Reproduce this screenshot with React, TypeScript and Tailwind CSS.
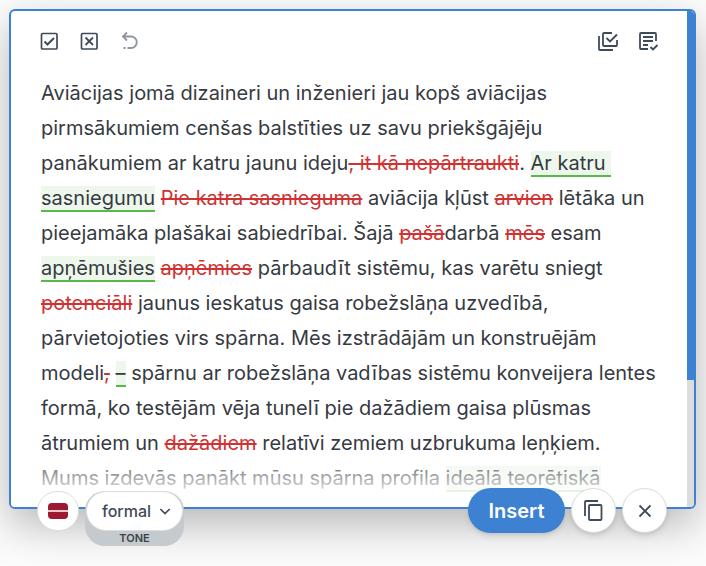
import React, { Fragment, useState } from "react";

type Part = { kind: "text" | "add" | "del"; value: string };

const parts: Part[] = [
  { kind: "text", value: "Aviācijas jomā dizaineri un inženieri jau kopš aviācijas pirmsākumiem cenšas balstīties uz savu priekšgājēju panākumiem ar katru jaunu ideju" },
  { kind: "del", value: ", it kā nepārtraukti" },
  { kind: "text", value: ". " },
  { kind: "add", value: "Ar katru sasniegumu" },
  { kind: "text", value: " " },
  { kind: "del", value: "Pie katra sasnieguma" },
  { kind: "text", value: " aviācija kļūst " },
  { kind: "del", value: "arvien" },
  { kind: "text", value: " lētāka un pieejamāka plašākai sabiedrībai. Šajā " },
  { kind: "del", value: "pašā" },
  { kind: "text", value: "darbā " },
  { kind: "del", value: "mēs" },
  { kind: "text", value: " esam " },
  { kind: "add", value: "apņēmušies" },
  { kind: "text", value: " " },
  { kind: "del", value: "apņēmies" },
  { kind: "text", value: " pārbaudīt sistēmu, kas varētu sniegt " },
  { kind: "del", value: "potenciāli" },
  { kind: "text", value: " jaunus ieskatus gaisa robežslāņa uzvedībā, pārvietojoties virs spārna. Mēs izstrādājām un konstruējām modeli" },
  { kind: "del", value: "," },
  { kind: "text", value: " " },
  { kind: "add", value: "–" },
  { kind: "text", value: " spārnu ar robežslāņa vadības sistēmu konveijera lentes formā, ko testējām vēja tunelī pie dažādiem gaisa plūsmas ātrumiem un " },
  { kind: "del", value: "dažādiem" },
  { kind: "text", value: " relatīvi zemiem uzbrukuma leņķiem. Mums izdevās panākt mūsu spārna profila " },
  { kind: "add", value: "ideālā teorētiskā" },
];

type IconProps = { children: React.ReactNode; className?: string };

const Icon: React.FC<IconProps> = ({ children, className = "size-6" }) => (
  <svg viewBox="0 0 24 24" fill="none" stroke="currentColor" strokeWidth="2" className={className} aria-hidden="true">
    {children}
  </svg>
);

const Toolbar: React.FC = () => (
  <div className="flex items-center justify-between text-[#3f4a5a]">
    <div className="flex gap-4">
      <button type="button" aria-label="Accept all">
        <Icon>
          <rect x="4.5" y="4.5" width="15.500" height="15.500" rx="1" strokeWidth="1.700" />
          <path d="M7.5 12.5l3 3 6.500-6.500" />
        </Icon>
      </button>
      <button type="button" aria-label="Reject all">
        <Icon>
          <rect x="4.5" y="4.5" width="15.500" height="15.500" rx="1" strokeWidth="1.700" />
          <path d="M8.500 8.500l7.500 7.500M16 8.500l-7.500 7.500" strokeWidth="1.800" />
        </Icon>
      </button>
      <button type="button" aria-label="Undo" className="text-[#8f959e]">
        <Icon>
          <path d="M10 3.500L6 7.500l4 4M6 7.500h8a5.700 5.700 0 0 1 0 11.500h-3.500M6.500 19h2" strokeWidth="1.800" />
        </Icon>
      </button>
    </div>
    <div className="flex gap-4">
      <button type="button" aria-label="Show changes">
        <Icon>
          <path d="M16 4H8a1 1 0 0 0-1 1v11a1 1 0 0 0 1 1h12a1 1 0 0 0 1-1v-5M10.500 9l3.500 3.500 7-7M3 7v13a1 1 0 0 0 1 1h13" strokeWidth="1.800" />
        </Icon>
      </button>
      <button type="button" aria-label="Show result">
        <Icon>
          <path d="M12 20H5a1 1 0 0 1-1-1V5a1 1 0 0 1 1-1h14a1 1 0 0 1 1 1v7M7 8h10M7 12h10M7 16h5M14.500 18l2.500 2.500 4.500-4.500" strokeWidth="1.800" />
        </Icon>
      </button>
    </div>
  </div>
);

const App: React.FC = () => {
  const [tone, setTone] = useState("formal");

  return (
    <div className="bg-[#fcfcfc] pt-[9px] pr-[10px] pb-5 pl-[9px] font-['Inter',sans-serif] text-[#363a42]">
      <main className="flex overflow-hidden rounded-md border-2 border-[#3d82d2] bg-white shadow-[0_16px_44px_rgba(0,0,0,0.28)]">
        <section className="relative flex-1 pt-[18px] pr-[27px] pb-[11px] pl-[26px]">
          <Toolbar />
          <p className="mt-[23px] px-1 text-xl leading-[35px] whitespace-pre-wrap">
            {parts.map((part, i) => {
              if (part.kind === "add") {
                return <ins key={i} className="border-b-2 border-[#56b948] bg-[#edf7ec] no-underline">{part.value}</ins>;
              }
              if (part.kind === "del") {
                return <del key={i} className="text-[#d03232] decoration-2">{part.value}</del>;
              }
              return <Fragment key={i}>{part.value}</Fragment>;
            })}
          </p>
          <div className="pointer-events-none absolute inset-x-0 bottom-0 h-14 bg-linear-to-t from-white from-15% to-transparent" />
        </section>
        <div className="flex w-[7px] flex-col bg-[#dcdcdc]">
          <div className="h-[369px] bg-[#3d82d2]" />
        </div>
      </main>

      <footer className="relative -mt-[21px] flex items-start justify-between pr-[29px] pl-7">
        <div className="flex gap-1.5 pt-[3px]">
          <button type="button" aria-label="Latvian" className="flex h-10 w-[42px] items-center justify-center rounded-full border border-[#dcdcdc] bg-white">
            <span className="flex h-4 w-5 flex-col justify-between overflow-hidden rounded-sm bg-[#e6c9ce]">
              <span className="h-[7px] bg-[#9b1c31]" />
              <span className="h-[7px] bg-[#9b1c31]" />
            </span>
          </button>
          <div className="flex flex-col rounded-[20px] bg-[#c5cacf]">
            <div className="relative mx-px">
              <select
                id="tone"
                value={tone}
                onChange={(e) => setTone(e.target.value)}
                className="h-10 w-[97px] appearance-none rounded-full border border-[#dcdcdc] bg-white pl-[15px] font-medium text-[#3f4a5a]"
              >
                <option value="formal">formal</option>
                <option value="casual">casual</option>
              </select>
              <Icon className="pointer-events-none absolute top-3 right-2.5 size-4 text-[#3f4a5a]">
                <path d="M5 9l7 7 7-7" strokeWidth="2.500" />
              </Icon>
            </div>
            <label htmlFor="tone" className="text-center text-[11px] leading-[15px] font-semibold text-[#3f4347]">TONE</label>
          </div>
        </div>

        <div className="flex gap-1.5">
          <button type="button" className="h-[45px] w-[97px] rounded-full bg-[#3d82d2] text-xl font-semibold text-white shadow-md">Insert</button>
          <button type="button" aria-label="Copy" className="flex size-[45px] items-center justify-center rounded-full border border-[#dcdcdc] bg-white text-[#3f4a5a] shadow-md">
            <Icon>
              <path d="M3 17V3a1 1 0 0 1 1-1h12" strokeWidth="1.800" />
              <rect x="7" y="6" width="12.500" height="15" rx="1" strokeWidth="1.800" />
            </Icon>
          </button>
          <button type="button" aria-label="Close" className="flex size-[45px] items-center justify-center rounded-full border border-[#dcdcdc] bg-white text-[#3f4a5a] shadow-md">
            <Icon>
              <path d="M6.500 6.500l11 11M17.500 6.500l-11 11" strokeWidth="1.800" />
            </Icon>
          </button>
        </div>
      </footer>
    </div>
  );
};

export default App;
